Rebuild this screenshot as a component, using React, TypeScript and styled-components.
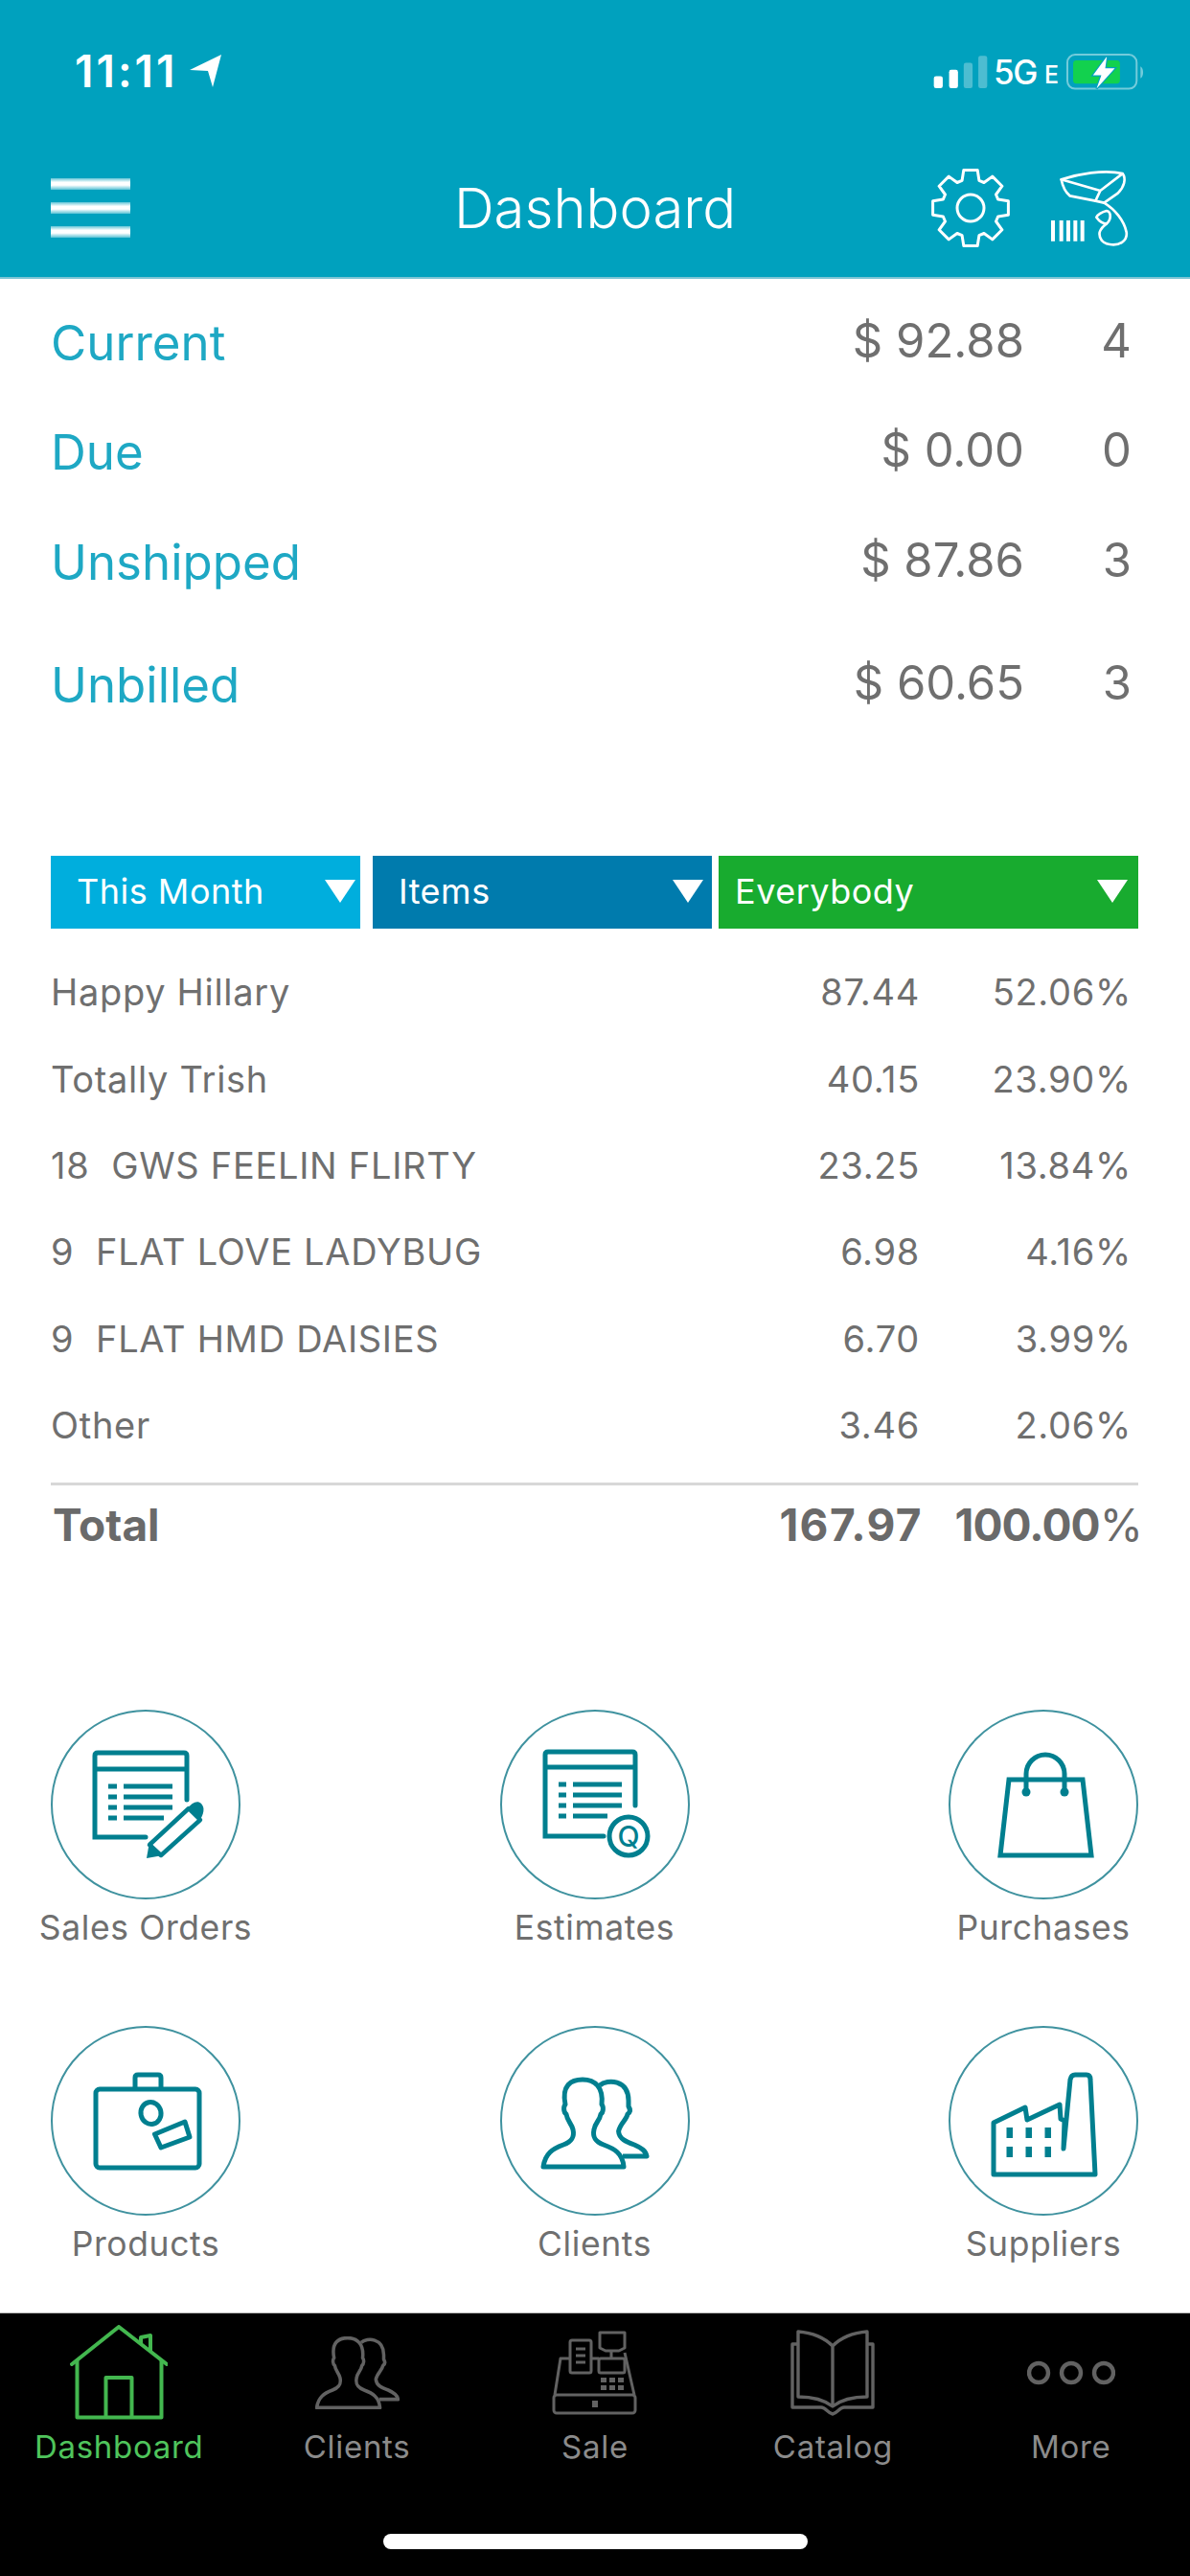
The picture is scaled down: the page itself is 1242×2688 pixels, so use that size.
import React from "react";
import styled, { createGlobalStyle } from "styled-components";

const Global = createGlobalStyle`
  html, body { margin: 0; padding: 0; background: #fff; }
  body { font-family: Inter, "Liberation Sans", sans-serif; }
  * { box-sizing: border-box; }
`;

const Page = styled.div`
  width: 1242px;
  height: 2688px;
  display: flex;
  flex-direction: column;
  overflow: hidden;
  background: #fff;
`;

const Header = styled.header`
  height: 291px;
  flex: none;
  background: #00a1be;
  border-bottom: 2px solid #7cc4d4;
  color: #fff;
`;

const StatusBar = styled.div`
  height: 148px;
  padding: 54px 45px 0 78px;
  display: flex;
  justify-content: space-between;
  align-items: flex-start;
`;

const TimeGroup = styled.div`
  display: flex;
  align-items: center;
  gap: 13px;
  height: 40px;
`;

const Time = styled.span`
  font-size: 46px;
  font-weight: 600;
  line-height: 40px;
  letter-spacing: 3px;
`;

const StatusRight = styled.div`
  display: flex;
  align-items: center;
  height: 42px;
`;

const NetText = styled.span<{ $small?: boolean }>`
  font-size: ${(p) => (p.$small ? 25 : 35)}px;
  font-weight: 500;
  line-height: 40px;
  letter-spacing: ${(p) => (p.$small ? 0 : -1.5)}px;
  margin-left: ${(p) => (p.$small ? 8 : 5)}px;
  margin-right: ${(p) => (p.$small ? 5 : 0)}px;
  padding-top: ${(p) => (p.$small ? 5 : 0)}px;
`;

const NavBar = styled.div`
  display: grid;
  grid-template-columns: 1fr auto 1fr;
  align-items: center;
  padding: 0 53px;
  height: 138px;
`;

const Burger = styled.div`
  display: flex;
  flex-direction: column;
  gap: 13px;
  width: 83px;
`;

const BurgerBar = styled.span`
  display: block;
  height: 12px;
  background: linear-gradient(rgba(255, 255, 255, 0.4) 0, #fff 35%, #fff 60%, rgba(255, 255, 255, 0.35) 100%);
`;

const Title = styled.h1`
  margin: 0;
  font-size: 58px;
  font-weight: 300;
  line-height: 70px;
`;

const NavIcons = styled.div`
  display: flex;
  justify-content: flex-end;
  align-items: center;
  gap: 40px;
  margin-right: 10px;
`;

const Summary = styled.section`
  padding: 9px 61px 0 53px;
  flex: none;
`;

const SummaryRow = styled.div<{ $extra?: number }>`
  height: 114px;
  margin-top: ${(p) => p.$extra ?? 0}px;
  display: flex;
  align-items: center;
  font-size: 51px;
`;

const SummaryLabel = styled.span`
  flex: 1;
  color: #1ea8c4;
`;

const SummaryValue = styled.span`
  color: #6f6f6f;
  font-size: 49px;
  text-align: right;
  margin-top: -3px;
`;

const SummaryCount = styled.span`
  width: 112px;
  color: #6f6f6f;
  font-size: 49px;
  text-align: right;
  margin-top: -3px;
`;

const Filters = styled.div`
  margin: 122px 54px 0 53px;
  height: 76px;
  display: flex;
  flex: none;
`;

const Filter = styled.div<{ $bg: string; $pad: number; $right: number; $width: number; $gap: number }>`
  width: ${(p) => p.$width}px;
  margin-left: ${(p) => p.$gap}px;
  background: ${(p) => p.$bg};
  color: #fff;
  font-size: 36px;
  letter-spacing: 0.5px;
  display: flex;
  align-items: center;
  justify-content: space-between;
  padding: 0 ${(p) => p.$right}px 2px ${(p) => p.$pad}px;
`;

const Caret = styled.span`
  width: 0;
  height: 0;
  border-left: 16px solid transparent;
  border-right: 16px solid transparent;
  border-top: 24px solid #fff;
`;

const Table = styled.section`
  margin-top: 21px;
  flex: none;
`;

const TableRow = styled.div`
  height: 90.4px;
  padding: 0 61px 0 53px;
  display: flex;
  align-items: center;
  font-size: 38px;
  letter-spacing: 0.7px;
  color: #6f6f6f;
`;

const RowName = styled.span`
  flex: 1;
  white-space: pre;
`;

const RowAmount = styled.span`
  text-align: right;
`;

const RowPct = styled.span`
  width: 221px;
  text-align: right;
`;

const Rule = styled.div`
  margin: 15px 54px 0 53px;
  height: 3px;
  background: #d8d8d8;
`;

const TotalRow = styled.div`
  height: 82px;
  padding: 0 50px 0 55px;
  display: flex;
  align-items: center;
  font-size: 46px;
  font-weight: 700;
  color: #6a6a6a;
`;

const TotalAmount = styled.span`
  letter-spacing: 1.4px;
  text-align: right;
`;

const TotalPct = styled.span`
  width: 229px;
  text-align: right;
  letter-spacing: -0.9px;
`;

const Light = styled.span`
  font-weight: 400;
`;

const Shortcuts = styled.section`
  margin-top: 151.6px;
  padding: 0 54px 0 53px;
  display: grid;
  grid-template-columns: repeat(3, 198px);
  justify-content: space-between;
  row-gap: 80px;
  flex: none;
`;

const Shortcut = styled.div`
  display: flex;
  flex-direction: column;
  align-items: center;
  width: 198px;
`;

const Circle = styled.div`
  width: 198px;
  height: 198px;
  border-radius: 50%;
  border: 2px solid #3f929f;
  position: relative;
  & > svg { display: block; margin: -2px; }
`;

const ShortcutLabel = styled.span`
  margin-top: 8px;
  font-size: 35.5px;
  line-height: 44px;
  letter-spacing: 0.6px;
  color: #6f6f6f;
  white-space: nowrap;
`;

const TabBar = styled.nav`
  margin-top: auto;
  height: 275px;
  flex: none;
  background: #000;
  border-top: 1px solid #bbb;
  display: flex;
  flex-direction: column;
`;

const Tabs = styled.div`
  display: grid;
  grid-template-columns: repeat(5, 1fr);
  padding-top: 11px;
`;

const Tab = styled.div<{ $active?: boolean }>`
  display: flex;
  flex-direction: column;
  align-items: center;
  color: ${(p) => (p.$active ? "#4fc45c" : "#8b8b8b")};
  font-size: 33px;
  letter-spacing: 0.7px;
`;

const TabIcon = styled.div`
  height: 102px;
  display: flex;
  align-items: center;
  justify-content: center;
  margin-bottom: 6px;
  filter: blur(0.5px);
`;

const TabLabel = styled.span`
  line-height: 40px;
`;

const HomeIndicator = styled.div`
  width: 443px;
  height: 16px;
  border-radius: 8px;
  background: #fff;
  margin: 71px auto 0;
`;

const TEAL = "#007f8f";
const GREY = "#626262";

const gearPath = (() => {
  const pts: string[] = [];
  const cx = 42, cy = 42, outer = 40, root = 30;
  for (let i = 0; i < 8; i++) {
    const a = (i * Math.PI) / 4 - Math.PI / 2;
    const p = (r: number, d: number) =>
      `${(cx + r * Math.cos(a + d)).toFixed(1)} ${(cy + r * Math.sin(a + d)).toFixed(1)}`;
    pts.push(p(root, -0.3), p(outer, -0.18), p(outer, 0.18), p(root, 0.3));
  }
  return "M" + pts.join(" L") + " Z";
})();

const GearIcon = () => (
  <svg width="84" height="84" viewBox="0 0 84 84" fill="none" stroke="#fff" strokeWidth="3" strokeLinejoin="round">
    <path d={gearPath} />
    <circle cx="42" cy="42" r="14" />
  </svg>
);

const ScannerIcon = () => (
  <svg width="84" height="84" viewBox="590 410 252 252" fill="none" stroke="#fff" strokeWidth="8" strokeLinejoin="round" strokeLinecap="round">
    <path d="M628 447 C680 430 760 415 820 428 C832 445 825 470 805 490 L762 520 L735 514 L655 498 C642 488 632 468 628 447 Z" />
    <path d="M628 447 L750 482 L735 514 M750 482 L818 430" />
    <path d="M762 520 C795 540 825 575 832 612 C836 640 808 655 780 650 C758 648 745 632 748 612 C752 600 760 592 770 585" />
    <path d="M770 585 C785 572 785 548 770 545 C755 548 740 558 738 565 C745 575 755 585 770 585 Z" />
    <path d="M602 575 V640 M628 575 V640 M650 575 V640 M672 575 V640 M694 575 V640" strokeWidth="12" strokeLinecap="butt" />
  </svg>
);

const ArrowIcon = () => (
  <svg width="34" height="34" viewBox="0 0 34 34" fill="#fff">
    <path d="M33 0 L24 34 L19 17 L0 16 Z" />
  </svg>
);

const SignalIcon = () => (
  <svg width="59" height="37" viewBox="215 55 178 110" fill="#fff">
    <rect x="220" y="122" width="28" height="38" rx="7" />
    <rect x="268" y="102" width="28" height="58" rx="7" />
    <rect x="314" y="80" width="28" height="80" rx="7" opacity="0.3" />
    <rect x="360" y="58" width="28" height="102" rx="7" opacity="0.3" />
  </svg>
);

const BatteryIcon = () => (
  <svg width="87" height="42" viewBox="630 45 260 125">
    <rect x="642" y="54" width="216" height="106" rx="24" fill="none" stroke="#fff" strokeOpacity="0.45" strokeWidth="6" />
    <path d="M870 90 C880 95 882 120 870 128 Z" fill="#fff" fillOpacity="0.45" />
    <rect x="660" y="72" width="146" height="72" rx="10" fill="#12d14e" />
    <path d="M765 60 L722 118 L748 118 L733 160 L790 96 L760 96 Z" fill="#fff" stroke="#00a1be" strokeWidth="7" paintOrder="stroke" />
  </svg>
);

const svg198 = { width: 198, height: 198, viewBox: "0 0 198 198" };

const OrderIcon = () => (
  <svg {...svg198} fill="none" stroke={TEAL} strokeWidth="5">
    <path d="M99 133 H46 V48 Q46 45 49 45 H139 Q142 45 142 48 V94 M46 62 H142" strokeLinecap="round" />
    <path d="M60 80 H69 M76 80 H127 M60 91 H69 M76 91 H127 M60 102 H69 M76 102 H127 M60 113 H69 M76 113 H118" />
    <path d="M103 141 L144 103 L156 115 L115 152 Z" strokeWidth="4.5" strokeLinejoin="round" />
    <path d="M142 104 C147 97 153 94 157 98 C161 102 160 109 155 116 Z" fill={TEAL} stroke="none" />
    <path d="M100 155 L103 138 L117 152 Z" fill={TEAL} stroke="none" />
  </svg>
);

const EstimateIcon = () => (
  <svg {...svg198} fill="none" stroke={TEAL} strokeWidth="5">
    <path d="M108 132 H47 V47 Q47 44 50 44 H138 Q141 44 141 47 V100 M47 60 H141" strokeLinecap="round" />
    <path d="M61 78 H69 M76 78 H127 M61 89 H69 M76 89 H127 M61 100 H69 M76 100 H127 M61 111 H69 M76 111 H112" />
    <circle cx="134" cy="132" r="20" />
    <text x="134" y="143" textAnchor="middle" fontFamily="Inter, sans-serif" fontSize="30" fontWeight="500" fill={TEAL} stroke="none">Q</text>
  </svg>
);

const BagIcon = () => (
  <svg {...svg198} fill="none" stroke={TEAL} strokeWidth="5">
    <path d="M63 73 H140 L149 152 H54 Z" />
    <path d="M81 86 V67 A20 20 0 0 1 121 67 V86" />
    <circle cx="81" cy="86" r="4.5" fill={TEAL} stroke="none" />
    <circle cx="121" cy="86" r="4.5" fill={TEAL} stroke="none" />
  </svg>
);

const CaseIcon = () => (
  <svg {...svg198} fill="none" stroke={TEAL} strokeWidth="5" strokeLinejoin="round">
    <rect x="47" y="66" width="108" height="82" rx="4" />
    <path d="M88 66 V54 Q88 51 91 51 H112 Q115 51 115 54 V66" />
    <ellipse cx="104.5" cy="91" rx="10.5" ry="11.5" transform="rotate(-12 104.5 91)" />
    <path d="M108.5 113 L140 100 L145 116 L115 127 Z" />
  </svg>
);

const PeoplePaths = () => (
  <>
    <path d="M45 147 C47 133 55 128 66 124 C74 121 78 117 76 108 C74 101 70 99 69 92 C66 90 66 84 68 82 C64 62 74 56 86 56 C99 56 108 64 106 82 C108 84 108 90 105 92 C104 99 99 101 98 108 C96 117 100 121 108 124 C119 128 128 133 129 147 Z" />
    <path d="M104 62 C112 55 134 56 134 78 L134 84 C136 87 136 90 133 92 C132 98 125 102 123.6 110 C124 118 132 121 140 124 C147 127 152 130 153 136 H128" />
  </>
);

const PeopleIcon = () => (
  <svg {...svg198} fill="none" stroke={TEAL} strokeWidth="5" strokeLinejoin="round">
    <PeoplePaths />
  </svg>
);

const FactoryIcon = () => (
  <svg {...svg198} fill="none" stroke={TEAL} strokeWidth="5" strokeLinejoin="round" strokeLinecap="round">
    <path d="M47 155 V101 L80 85 L82 98 L116 82 L117 97 L121 99 L120 128 L127 56 Q128 51 132 51 H144 Q148 51 148 56 L153 155 Z" />
    <g fill={TEAL} stroke="none">
      <rect x="60.5" y="106" width="6.5" height="11" />
      <rect x="80.5" y="106" width="6.5" height="11" />
      <rect x="100.5" y="106" width="6.5" height="11" />
      <rect x="60.5" y="126" width="6.5" height="11" />
      <rect x="80.5" y="126" width="6.5" height="11" />
      <rect x="100.5" y="126" width="6.5" height="11" />
    </g>
  </svg>
);

const TabHome = () => (
  <svg width="102" height="100" viewBox="-1 0 102 100" fill="none" stroke="#43b74f" strokeWidth="4" strokeLinejoin="round">
    <path d="M1 41 L50 2 L100 41" strokeLinecap="round" />
    <path d="M6.5 37 V96.5 H94.5 V37" />
    <path d="M36.5 96.5 V55 H63.5 V96.5" />
    <path d="M73 20 V13 L83 11 V28" />
  </svg>
);

const TabClients = () => (
  <svg width="88" height="76" viewBox="43 54 112 95" preserveAspectRatio="none" fill="none" stroke={GREY} strokeWidth="4.5" strokeLinejoin="round">
    <PeoplePaths />
  </svg>
);

const TabRegister = () => (
  <svg width="90" height="90" viewBox="0 0 90 90" fill="none" stroke={GREY} strokeWidth="3" strokeLinejoin="round">
    <path d="M3 68 L9 30 H19 M41 30 H49 M76 24 L86 68" />
    <rect x="2" y="68" width="85" height="19" rx="3" />
    <rect x="19" y="11" width="22" height="34" rx="2" />
    <path d="M25 20 H35 M25 27 H35 M25 34 H35" />
    <path d="M50 3 H76 V19 L70 22 H56 L50 19 Z" />
    <path d="M62 22 V29" />
    <rect x="49" y="30" width="27" height="15" rx="2" />
    <g fill={GREY} stroke="none">
      <rect x="51" y="50" width="6" height="5" /><rect x="60" y="50" width="6" height="5" /><rect x="69" y="50" width="6" height="5" />
      <rect x="51" y="58" width="6" height="5" /><rect x="60" y="58" width="6" height="5" /><rect x="69" y="58" width="6" height="5" />
      <rect x="42" y="74" width="6" height="7" />
    </g>
  </svg>
);

const TabBook = () => (
  <svg width="90" height="90" viewBox="0 0 90 90" fill="none" stroke={GREY} strokeWidth="3.4" strokeLinejoin="round">
    <path d="M45 17 C36 8 22 3 9 2 V70 C24 70 36 73 45 80 C54 73 66 70 81 70 V2 C68 3 54 8 45 17 V80" />
    <path d="M9 15 H3 V81 H33 C38 81 40 87 45 88 C50 87 52 81 57 81 H87 V15 H81" />
  </svg>
);

const TabMore = () => (
  <svg width="92" height="30" viewBox="0 0 92 30" fill="none" stroke={GREY} strokeWidth="4.4">
    <circle cx="12" cy="15" r="10" />
    <circle cx="46" cy="15" r="10" />
    <circle cx="80" cy="15" r="10" />
  </svg>
);

const summary = [
  { label: "Current", value: "$ 92.88", count: "4" },
  { label: "Due", value: "$ 0.00", count: "0" },
  { label: "Unshipped", value: "$ 87.86", count: "3", extra: 1 },
  { label: "Unbilled", value: "$ 60.65", count: "3", extra: 14 },
];

const rows = [
  ["Happy Hillary", "87.44", "52.06%"],
  ["Totally Trish", "40.15", "23.90%"],
  ["18  GWS FEELIN FLIRTY", "23.25", "13.84%"],
  ["9  FLAT LOVE LADYBUG", "6.98", "4.16%"],
  ["9  FLAT HMD DAISIES", "6.70", "3.99%"],
  ["Other", "3.46", "2.06%"],
];

const shortcuts = [
  { label: "Sales Orders", icon: <OrderIcon /> },
  { label: "Estimates", icon: <EstimateIcon /> },
  { label: "Purchases", icon: <BagIcon /> },
  { label: "Products", icon: <CaseIcon /> },
  { label: "Clients", icon: <PeopleIcon /> },
  { label: "Suppliers", icon: <FactoryIcon /> },
];

const tabs = [
  { label: "Dashboard", icon: <TabHome />, active: true },
  { label: "Clients", icon: <TabClients /> },
  { label: "Sale", icon: <TabRegister /> },
  { label: "Catalog", icon: <TabBook /> },
  { label: "More", icon: <TabMore /> },
];

export default function App() {
  return (
    <Page>
      <Global />
      <Header>
        <StatusBar>
          <TimeGroup>
            <Time>11:11</Time>
            <ArrowIcon />
          </TimeGroup>
          <StatusRight>
            <SignalIcon />
            <NetText>5G</NetText>
            <NetText $small>E</NetText>
            <BatteryIcon />
          </StatusRight>
        </StatusBar>
        <NavBar>
          <Burger>
            <BurgerBar />
            <BurgerBar />
            <BurgerBar />
          </Burger>
          <Title>Dashboard</Title>
          <NavIcons>
            <GearIcon />
            <ScannerIcon />
          </NavIcons>
        </NavBar>
      </Header>

      <Summary>
        {summary.map((s) => (
          <SummaryRow key={s.label} $extra={s.extra}>
            <SummaryLabel>{s.label}</SummaryLabel>
            <SummaryValue>{s.value}</SummaryValue>
            <SummaryCount>{s.count}</SummaryCount>
          </SummaryRow>
        ))}
      </Summary>

      <Filters>
        <Filter $bg="#00aedd" $pad={27} $right={5} $width={323} $gap={0}>This Month<Caret /></Filter>
        <Filter $bg="#007bad" $pad={27} $right={9} $width={354} $gap={13}>Items<Caret /></Filter>
        <Filter $bg="#18ab2f" $pad={17} $right={11} $width={438} $gap={7}>Everybody<Caret /></Filter>
      </Filters>

      <Table>
        {rows.map(([name, amount, pct]) => (
          <TableRow key={name}>
            <RowName>{name}</RowName>
            <RowAmount>{amount}</RowAmount>
            <RowPct>{pct}</RowPct>
          </TableRow>
        ))}
        <Rule />
        <TotalRow>
          <RowName>Total</RowName>
          <TotalAmount>167.97</TotalAmount>
          <TotalPct>100.00<Light>%</Light></TotalPct>
        </TotalRow>
      </Table>

      <Shortcuts>
        {shortcuts.map((s) => (
          <Shortcut key={s.label}>
            <Circle>{s.icon}</Circle>
            <ShortcutLabel>{s.label}</ShortcutLabel>
          </Shortcut>
        ))}
      </Shortcuts>

      <TabBar>
        <Tabs>
          {tabs.map((t) => (
            <Tab key={t.label} $active={t.active}>
              <TabIcon>{t.icon}</TabIcon>
              <TabLabel>{t.label}</TabLabel>
            </Tab>
          ))}
        </Tabs>
        <HomeIndicator />
      </TabBar>
    </Page>
  );
}
